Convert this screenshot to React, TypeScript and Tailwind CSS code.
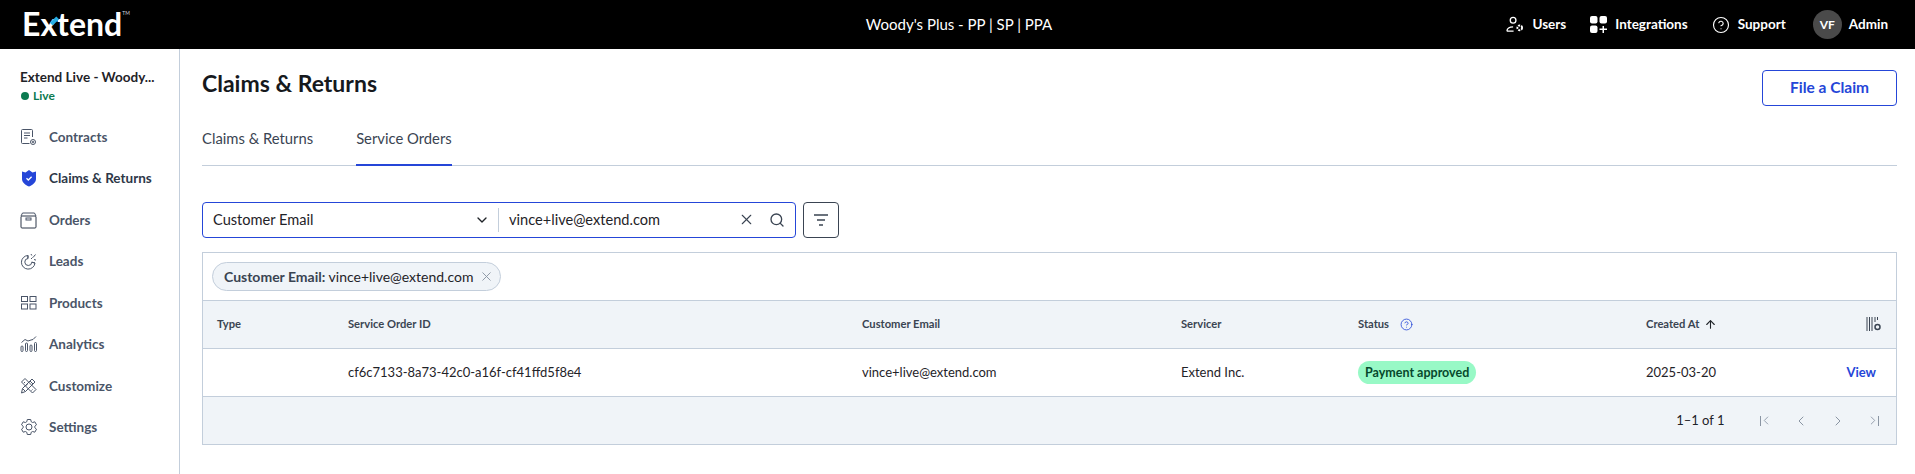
import { ReactNode } from 'react';
import { ArrowUp, ChevronDown, ChevronLeft, ChevronRight, CircleHelp, Search, X } from 'lucide-react';

const iconProps = {
  width: 18,
  height: 18,
  viewBox: '0 0 18 18',
  fill: 'none',
  stroke: '#4a5568',
  strokeWidth: 1,
};

const ContractsIcon = () => (
  <svg {...iconProps}>
    <path d="M12.5 9V2.5a1 1 0 0 0-1-1H2.5a1 1 0 0 0-1 1v12a1 1 0 0 0 1 1h7" />
    <path d="M4 5h6M4 7.5h6M4 10h3.5" />
    <circle cx="13" cy="14" r="2.5" />
    <circle cx="13" cy="14" r="0.8" />
  </svg>
);

const ShieldIcon = () => (
  <svg width="18" height="18" viewBox="0 0 18 18">
    <path d="M2 2.500l3.500 1L9 1l3.500 2.500L16 2.500V10c0 3.500-3.500 6-7 7.500C5.500 16 2 13.500 2 10z" fill="#2546d8" />
    <path d="M6.500 9.200l1.800 1.800 3.300-3.300" fill="none" stroke="#fff" strokeWidth="1.300" />
  </svg>
);

const OrdersIcon = () => (
  <svg {...iconProps}>
    <path d="M1 5l1.500-3h12l1.500 3" />
    <rect x="1" y="5" width="15" height="12" rx="1" stroke="#2d3748" />
    <rect x="6" y="7" width="5" height="2" />
  </svg>
);

const LeadsIcon = () => (
  <svg {...iconProps}>
    <path d="M8 3.500a6.800 6.800 0 1 0 7 7.500l-3.200-.8a3.500 3.500 0 1 1-3.800-3.700z" />
    <path d="M8 3.500l-.2 3M15 11l-3.200-.8" />
    <path d="M11 2l.8 1.500M13 5.500l2.500-3M14 7.500l2 .6M11 7l1.500-1.500" />
  </svg>
);

const ProductsIcon = () => (
  <svg {...iconProps}>
    <rect x="1.500" y="2.500" width="6" height="5" />
    <rect x="10" y="2.500" width="6" height="5" />
    <rect x="1.500" y="10" width="6" height="5" />
    <rect x="10" y="10" width="6" height="5" />
  </svg>
);

const AnalyticsIcon = () => (
  <svg {...iconProps}>
    <rect x="1" y="11" width="2" height="5.500" rx="1" />
    <rect x="5.500" y="8" width="2" height="8.500" rx="1" />
    <rect x="10" y="10" width="2" height="6.500" rx="1" />
    <rect x="14.500" y="7.500" width="2" height="9" rx="1" />
    <path d="M1.500 7.500L5 4.500l3 1.500 3-1 2-.5 3-3" />
  </svg>
);

const CustomizeIcon = () => (
  <svg {...iconProps}>
    <path d="M1.500 16l1-4.500L12 2l3 3-9.500 9.500z" />
    <path d="M2.500 11.500l3 3M10 4l3 3" />
    <path d="M5 1.500L1.500 5l11 11 3.500-3.500z" />
    <path d="M4 6l1-1M6.500 8.500l1-1M9 11l1-1M11.500 13.500l1-1" />
  </svg>
);

const SettingsIcon = () => (
  <svg {...iconProps}>
    <path d="M7.300 1.500h3.400l.5 2.200 1.400.8 2.200-.7 1.700 3-1.700 1.500v1.400l1.700 1.500-1.700 3-2.200-.7-1.400.8-.5 2.200H7.300l-.5-2.200-1.400-.8-2.200.7-1.700-3 1.700-1.500V8.300L1.500 6.800l1.700-3 2.200.7 1.400-.8z" />
    <circle cx="9" cy="9" r="3" />
  </svg>
);

const navItems = [
  { label: 'Contracts', icon: <ContractsIcon /> },
  { label: 'Claims & Returns', icon: <ShieldIcon />, active: true },
  { label: 'Orders', icon: <OrdersIcon /> },
  { label: 'Leads', icon: <LeadsIcon /> },
  { label: 'Products', icon: <ProductsIcon /> },
  { label: 'Analytics', icon: <AnalyticsIcon /> },
  { label: 'Customize', icon: <CustomizeIcon /> },
  { label: 'Settings', icon: <SettingsIcon /> },
];

const HeaderLink = ({ icon, label }: { icon: ReactNode; label: string }) => (
  <div className="flex items-center gap-[8px]">
    {icon}
    <span className="text-[13.500px] font-bold text-white">{label}</span>
  </div>
);

const Header = () => (
  <header className="h-[49px] bg-black grid grid-cols-[1fr_auto_1fr] items-center pl-[22px] pr-[27px] text-white">
    {/* Logo */}
    <div className="relative flex items-start h-[32px] mt-[-2px]">
      <span className="text-[32px] leading-[32px] font-bold text-white">Extend</span>
      <span className="text-[5px] leading-none mt-[3px] text-gray-300">TM</span>
      <span className="absolute left-[28px] top-[11px] w-[9px] h-[4px] bg-[#27aee4] -rotate-45" />
    </div>
    <div className="text-[15px] ml-[8px]">Woody's Plus - PP | SP | PPA</div>
    <div className="flex items-center justify-end gap-[24px]">
      <HeaderLink
        label="Users"
        icon={
          <svg width="18" height="17" viewBox="0 0 19 17" fill="none" stroke="#fff" strokeWidth="1.400">
            <circle cx="7.500" cy="4" r="3" />
            <path d="M1 15.500h7M1 15.500c0-3 2.500-4.500 6.500-4.500" />
            <circle cx="14.500" cy="12" r="2.500" strokeWidth="2" strokeDasharray="2 1" />
          </svg>
        }
      />
      <HeaderLink
        label="Integrations"
        icon={
          <svg width="17" height="17" viewBox="0 0 17 17" fill="#fff">
            <rect x="0" y="0" width="7.500" height="7.500" rx="2" />
            <rect x="9.500" y="0" width="7.500" height="7.500" rx="2" />
            <rect x="0" y="9.500" width="7.500" height="7.500" rx="2" />
            <path d="M12.500 10h1.500v2.500h3V14h-3v3h-1.500v-3h-3v-1.500h3z" />
          </svg>
        }
      />
      <HeaderLink label="Support" icon={<CircleHelp size={18} color="#fff" strokeWidth={1.500} />} />
      <div className="flex items-center gap-[7px] ml-[3px]">
        <div className="w-[29px] h-[29px] rounded-full bg-[#4a4a4a] flex items-center justify-center text-[12px] font-bold">VF</div>
        <span className="text-[13.500px] font-bold">Admin</span>
      </div>
    </div>
  </header>
);

const Sidebar = () => (
  <aside className="w-[180px] shrink-0 border-r border-[#c3cedb] pl-[20px] pt-[20px]">
    <div className="text-[13.500px] leading-[17px] font-bold text-[#1f2328] whitespace-nowrap">Extend Live - Woody...</div>
    <div className="flex items-center gap-[4px] mt-[1px] ml-[1px] text-[12px] leading-[17px] font-bold text-[#0b7a50]">
      <span className="w-[8px] h-[8px] rounded-full bg-[#0b7a50]" />
      Live
    </div>
    <nav className="flex flex-col mt-[12px]">
      {navItems.map((item) => (
        <div key={item.label} className="h-[41.500px] flex items-center gap-[11px]">
          <span className="w-[18px] h-[18px] shrink-0">{item.icon}</span>
          <span className={item.active ? 'text-[13.500px] font-bold text-[#2d3748]' : 'text-[13.500px] font-bold text-[#4a5568]'}>
            {item.label}
          </span>
        </div>
      ))}
    </nav>
  </aside>
);

const columns = 'grid grid-cols-[131px_514px_319px_177px_288px_1fr] items-center h-[48px]';

const Table = () => (
  <div className="mt-[14px] border border-[#c3cedb] text-[#1f2328]">
    <div className="h-[47px] flex items-center pl-[9px]">
      <div className="h-[29px] flex items-center gap-[6px] rounded-full border border-[#c3cedb] bg-[#f0f4f8] pl-[11px] pr-[6px] text-[14px]">
        <span>
          <span className="font-bold text-[#3a4452]">Customer Email:</span> vince+live@extend.com
        </span>
        <X size={15} color="#8a95a3" strokeWidth={1.500} />
      </div>
    </div>
    <div className={`${columns} bg-[#f0f4f8] border-t border-[#c3cedb] text-[11.200px] font-bold text-[#3a4452] [&>div]:pl-[14px]`}>
      <div>Type</div>
      <div>Service Order ID</div>
      <div>Customer Email</div>
      <div>Servicer</div>
      <div className="flex items-center gap-[11px]">
        Status
        <CircleHelp size={13} color="#2546d8" strokeWidth={1.500} />
      </div>
      <div className="flex items-center justify-between pr-[15px]">
        <span className="flex items-center gap-[5px]">
          Created At
          <ArrowUp size={13} color="#1f2328" strokeWidth={2} />
        </span>
        <svg width="15" height="16" viewBox="0 0 15 16" fill="none" stroke="#3a4452" strokeWidth="1">
          <path d="M1 1v14M3.500 1v14M6 1v14M9 1v5M11.500 1v3" />
          <circle cx="11.500" cy="11" r="2.500" strokeWidth="1.500" />
        </svg>
      </div>
    </div>
    <div className={`${columns} border-t border-[#c3cedb] text-[13px] [&>div]:pl-[14px]`}>
      <div />
      <div>cf6c7133-8a73-42c0-a16f-cf41ffd5f8e4</div>
      <div>vince+live@extend.com</div>
      <div>Extend Inc.</div>
      <div>
        <span className="inline-block h-[23px] leading-[23px] px-[7px] rounded-full bg-[#98f9c6] text-[12.500px] font-bold text-[#06482c]">
          Payment approved
        </span>
      </div>
      <div className="flex items-center justify-between pr-[20px]">
        2025-03-20
        <span className="font-bold text-[#2546d8]">View</span>
      </div>
    </div>
    <div className="h-[48px] bg-[#f0f4f8] border-t border-[#c3cedb] flex items-center justify-end pr-[14px] text-[13px]">
      <span className="mr-[32px]">1–1 of 1</span>
      <div className="flex items-center gap-[20.500px] text-[#8a95a3]">
        <span className="relative w-[16px] flex justify-center">
          <span className="absolute left-[3px] top-[3px] w-px h-[10px] bg-[#8a95a3]" />
          <ChevronLeft size={15} strokeWidth={1.500} className="ml-[2px]" />
        </span>
        <ChevronLeft size={16} strokeWidth={1.500} />
        <ChevronRight size={16} strokeWidth={1.500} />
        <span className="relative w-[16px] flex justify-center">
          <ChevronRight size={15} strokeWidth={1.500} className="mr-[2px]" />
          <span className="absolute right-[3px] top-[3px] w-px h-[10px] bg-[#8a95a3]" />
        </span>
      </div>
    </div>
  </div>
);

const App = () => {
  return (
    <div className="w-[1915px] h-[474px] overflow-hidden bg-white font-['Lato','Liberation_Sans',sans-serif] flex flex-col">
      <Header />
      <div className="flex flex-1 min-h-0">
        <Sidebar />
        <main className="flex-1 pl-[22px] pr-[18px]">
          <div className="flex items-start justify-between pt-[21px]">
            <h1 className="text-[23px] leading-[28px] mt-[-1px] font-bold text-[#16191d]">Claims &amp; Returns</h1>
            <button className="w-[135px] h-[36px] rounded-[4px] border border-[#2546d8] text-[15.500px] font-bold text-[#2546d8]">
              File a Claim
            </button>
          </div>
          {/* Tabs */}
          <div className="flex gap-[43px] border-b border-[#c3cedb] h-[61px] mt-[-1px] pt-[20px] text-[14.800px] text-[#3a4452]">
            <div className="h-[41px] pt-[2px]">Claims &amp; Returns</div>
            <div className="h-[41px] pt-[2px] border-b-2 border-[#2546d8]">Service Orders</div>
          </div>
          {/* Search */}
          <div className="flex gap-[7px] mt-[36px]">
            <div className="w-[594px] h-[36px] rounded-[4px] border border-[#2546d8] flex items-center text-[14.600px] text-[#1f2328]">
              <div className="w-[296px] pl-[10px] pr-[8px] flex items-center justify-between border-r border-[#c3cedb] h-[24px]">
                Customer Email
                <ChevronDown size={16} strokeWidth={2} color="#1f2328" />
              </div>
              <div className="flex-1 pl-[10px] pr-[10px] flex items-center justify-between">
                vince+live@extend.com
                <span className="flex items-center gap-[14px]">
                  <X size={17} strokeWidth={1.500} color="#3a4452" />
                  <Search size={16} strokeWidth={2} color="#3a4452" />
                </span>
              </div>
            </div>
            <button className="w-[36px] h-[36px] rounded-[4px] border border-[#3a4452] flex items-center justify-center">
              <svg width="14" height="12" viewBox="0 0 14 12" stroke="#3a4452" strokeWidth="1.400" fill="none">
                <path d="M0 1h14M3 6h8M5 11h4" />
              </svg>
            </button>
          </div>
          <Table />
        </main>
      </div>
    </div>
  );
};

export default App;
